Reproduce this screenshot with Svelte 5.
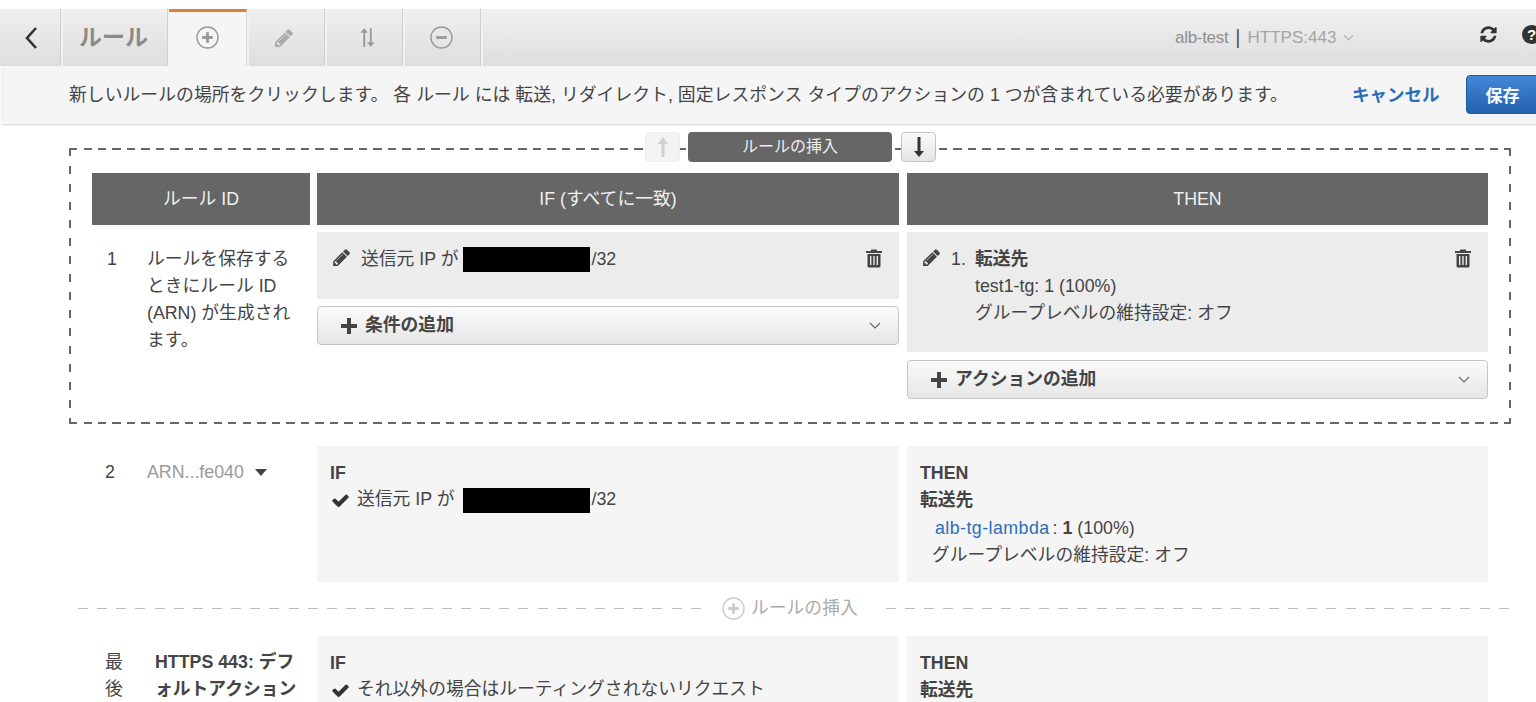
<script>
	const pencil =
		'M363 1408l91-91-235-235-91 91v107h128v128h107zm523-928q0-22-22-22-10 0-17 7l-542 542q-7 7-7 17 0 22 22 22 10 0 17-7l542-542q7-7 7-17zm-54-192l416 416-832 832h-416v-416zm683 96q0 53-37 90l-166 166-416-416 166-165q36-38 90-38 53 0 91 38l235 234q37 39 37 91z';
	const check =
		'M1671 566q0 40-28 68l-724 724-136 136q-28 28-68 28t-68-28l-136-136-362-362q-28-28-28-68t28-68l136-136q28-28 68-28t68 28l294 295 656-657q28-28 68-28t68 28l136 136q28 28 28 68z';
	const refresh =
		'M1639 1056q0 5-1 7-64 268-268 434.5t-478 166.5q-146 0-282.5-55t-243.5-157l-129 129q-19 19-45 19t-45-19-19-45v-448q0-26 19-45t45-19h448q26 0 45 19t19 45-19 45l-137 137q71 66 161 102t187 36q134 0 250-65t186-179q11-17 53-117 8-23 30-23h192q13 0 22.5 9.5t9.5 22.5zm25-800v448q0 26-19 45t-45 19h-448q-26 0-45-19t-19-45 19-45l138-138q-148-137-349-137-134 0-250 65t-186 179q-11 17-53 117-8 23-30 23h-199q-13 0-22.5-9.5t-9.5-22.5v-7q65-268 270-434.5t480-166.5q146 0 284 55.5t245 156.5l130-129q19-19 45-19t45 19 19 45z';
</script>

{#snippet trash()}
	<svg class="trash" viewBox="0 0 18 20" width="18" height="20">
		<path d="M6 3V1.500h6V3h5v2H1V3z" fill="#444" />
		<path
			d="M2.500 6h13v12a1.500 1.500 0 0 1-1.500 1.500H4A1.500 1.500 0 0 1 2.500 18zM5 8v9h1.400V8zm3.300 0v9h1.400V8zm3.300 0v9H13V8z"
			fill="#444"
			fill-rule="evenodd"
		/>
	</svg>
{/snippet}

{#snippet chevron()}
	<svg class="chevron" viewBox="0 0 12 7" width="12" height="7">
		<path d="M1 1l5 5 5-5" fill="none" stroke="#666" stroke-width="1.2" />
	</svg>
{/snippet}

{#snippet plus()}
	<svg class="plus" viewBox="0 0 16 16" width="16" height="16">
		<path d="M6 0h4v6h6v4h-6v6H6v-6H0V6h6z" fill="#444" />
	</svg>
{/snippet}

{#snippet circleIcon(minus, size, color)}
	<svg viewBox="0 0 24 24" width={size} height={size}>
		<circle cx="12" cy="12" r="11" fill="none" stroke={color} stroke-width="1.4" />
		<path d={minus ? 'M6.500 10.500h11v3h-11z' : 'M10.500 6.500h3v4h4v3h-4v4h-3v-4h-4v-3h4z'} fill={color} />
	</svg>
{/snippet}

<div class="page">
	<div class="toolbar">
		<div class="tab back">
			<svg viewBox="0 0 14 24" width="14" height="24">
				<path d="M12 2L3 12l9 10" fill="none" stroke="#333" stroke-width="2.6" />
			</svg>
		</div>
		<div class="tab title">ルール</div>
		<div class="tab active">{@render circleIcon(false, 23, '#999')}</div>
		<div class="tab icon pencil-tab">
			<svg viewBox="0 0 1515 1536" width="18" height="18"><path d={pencil} fill="#aaa" /></svg>
		</div>
		<div class="tab icon sort-tab">
			<svg viewBox="0 0 16 22" width="15" height="21">
				<path d="M3.500 21V6H0.500L4.500 1l4 5H5.500v15zM10.500 1v15h-3l4 5 4-5h-3V1z" fill="#999" />
			</svg>
		</div>
		<div class="tab icon minus-tab">{@render circleIcon(true, 23, '#999')}</div>
		<div class="toolbar-rest">
			<div class="lb-name">
				<span class="lb">alb-test</span> <span class="pipe">|</span> <span class="listener">HTTPS:443</span>
				<svg viewBox="0 0 12 7" width="11" height="7">
					<path d="M1 1l5 5 5-5" fill="none" stroke="#aaa" stroke-width="1.2" />
				</svg>
			</div>
			<svg class="refresh" viewBox="0 0 1792 1792" width="19" height="19"><path d={refresh} fill="#333" /></svg>
			<span class="help">?</span>
		</div>
	</div>

	<div class="message">
		<p>新しいルールの場所をクリックします。 各 ルール には 転送, リダイレクト, 固定レスポンス タイプのアクションの 1 つが含まれている必要があります。</p>
		<span class="cancel">キャンセル</span>
		<button class="save">保存</button>
	</div>

	<section class="edit-box">
		<div class="insert-control">
			<span class="arrow-btn disabled">
				<svg viewBox="0 0 12 22" width="12" height="22">
					<path d="M4.500 21V8H1L6 1l5 7H7.500v13z" fill="#d0d0d0" />
				</svg>
			</span>
			<span class="insert-label">ルールの挿入</span>
			<span class="arrow-btn down">
				<svg viewBox="0 0 12 22" width="12" height="22">
					<path d="M4.500 1v14H1l5 6 5-6H7.500V1z" fill="#333" />
				</svg>
			</span>
		</div>

		<div class="grid head">
			<div class="col1 hd">ルール ID</div>
			<div class="col2 hd">IF (すべてに一致)</div>
			<div class="hd">THEN</div>
		</div>

		<div class="grid edit-row">
			<div class="col1 rule-cell">
				<span class="num">1</span>
				<span class="rule-note">ルールを保存するときにルール ID (ARN) が生成されます。</span>
			</div>
			<div class="col2">
				<div class="edit-cell if-edit">
					<svg class="pen" viewBox="0 0 1515 1536" width="17" height="17"><path d={pencil} fill="#444" /></svg>
					<span>送信元 IP が</span>
					<span class="redact"></span><span class="after-redact">/32</span>
					{@render trash()}
				</div>
				<div class="add-btn">{@render plus()}<b>条件の追加</b>{@render chevron()}</div>
			</div>
			<div>
				<div class="edit-cell then-edit">
					<svg class="pen" viewBox="0 0 1515 1536" width="17" height="17"><path d={pencil} fill="#444" /></svg>
					<span class="step">1.</span>
					<div class="then-text">
						<b>転送先</b>
						<div>test1-tg: 1 (100%)</div>
						<div>グループレベルの維持設定: オフ</div>
					</div>
					{@render trash()}
				</div>
				<div class="add-btn then-add">{@render plus()}<b>アクションの追加</b>{@render chevron()}</div>
			</div>
		</div>
	</section>

	<div class="grid rule-row">
		<div class="col1 rule-cell">
			<span class="num">2</span>
			<span class="arn">ARN...fe040</span>
			<span class="caret"></span>
		</div>
		<div class="col2 view-cell">
			<b>IF</b>
			<div class="cond">
				<svg viewBox="0 0 1792 1792" width="19" height="19"><path d={check} fill="#333" /></svg>
				<span>送信元 IP が</span>
				<span class="redact"></span><span class="after-redact">/32</span>
			</div>
		</div>
		<div class="view-cell">
			<b>THEN</b>
			<b class="forward">転送先</b>
			<div class="target"><span class="link">alb-tg-lambda</span><span class="colon">:</span> <b>1</b> (100%)</div>
			<div class="stick">グループレベルの維持設定: オフ</div>
		</div>
	</div>

	<div class="divider">
		<span class="dash left"></span>
		<span class="insert-link">{@render circleIcon(false, 23, '#ccc')}<span>ルールの挿入</span></span>
		<span class="dash"></span>
	</div>

	<div class="grid rule-row last">
		<div class="col1 rule-cell">
			<span class="num last-num">最後</span>
			<b class="default-name">HTTPS 443: デフォルトアクション</b>
		</div>
		<div class="col2 view-cell">
			<b>IF</b>
			<div class="cond">
				<svg viewBox="0 0 1792 1792" width="19" height="19"><path d={check} fill="#333" /></svg>
				<span>それ以外の場合はルーティングされないリクエスト</span>
			</div>
		</div>
		<div class="view-cell">
			<b>THEN</b>
			<b class="forward">転送先</b>
		</div>
	</div>
</div>

<style>
	:global(body) {
		margin: 0;
		background: #fff;
		overflow: hidden;
	}

	.page {
		width: 1536px;
		height: 702px;
		overflow: hidden;
		padding-top: 9px;
		box-sizing: border-box;
		font-family: 'Liberation Sans', 'Noto Sans CJK JP', sans-serif;
		font-size: 17.8px;
		line-height: 27px;
		color: #444;
	}

	b {
		font-weight: 700;
	}

	.toolbar {
		display: flex;
		height: 57px;
		background: linear-gradient(#f0f0f0, #dedede);
	}

	.tab {
		display: flex;
		align-items: center;
		justify-content: center;
		box-sizing: border-box;
		height: 57px;
		margin-right: 4px;
		border-right: 1px solid #cfcfcf;
		background: linear-gradient(#efefef, #dedede);
		box-shadow: 2px 0 0 #f1f1f1;
	}

	.back {
		width: 61px;
		margin-right: 3px;
		padding-left: 2px;
	}

	.title {
		width: 104px;
		margin-right: 0;
		padding-right: 4px;
		font-size: 23px;
		font-weight: 700;
		color: #8a8a8a;
	}

	.active {
		width: 78px;
		margin-left: 1px;
		margin-right: 3px;
		background: #f5f5f5;
		border-top: 3px solid #dd8033;
		border-right: 1px solid #d4d4d4;
		padding-bottom: 3px;
	}

	.icon {
		width: 75px;
		margin-right: 3px;
	}

	.pencil-tab {
		padding-right: 6px;
	}

	.sort-tab {
		padding-left: 4px;
	}

	.minus-tab {
		padding-right: 4px;
	}

	.toolbar-rest {
		flex: 1;
		display: flex;
		align-items: center;
		min-width: 0;
		padding-left: 691px;
		white-space: nowrap;
	}

	.lb-name {
		display: flex;
		align-items: center;
		gap: 7px;
		flex: none;
		width: 304px;
		font-size: 17px;
		color: #8f8f8f;
	}

	.lb {
		letter-spacing: -0.3px;
	}

	.pipe {
		color: #555;
		font-size: 20px;
	}

	.listener {
		color: #a5a5a5;
	}

	.refresh {
		margin-top: -6px;
		flex: none;
	}

	.help {
		flex: none;
		width: 19px;
		height: 19px;
		margin-left: 24px;
		margin-top: -6px;
		border-radius: 50%;
		background: #333;
		color: #fff;
		font-size: 15px;
		font-weight: 700;
		line-height: 19px;
		text-align: center;
	}

	.message {
		display: flex;
		align-items: center;
		height: 58px;
		margin-left: 2px;
		padding-left: 67px;
		background: #f5f5f5;
		box-shadow: 0 1px 2px #d0d0d0;
		white-space: nowrap;
	}

	.message p {
		margin: 0;
		width: 1283px;
		flex: none;
		font-size: 17.85px;
	}

	.cancel {
		flex: none;
		font-size: 17.5px;
		font-weight: 700;
		color: #2a6ebb;
	}

	.save {
		flex: none;
		width: 80px;
		height: 39px;
		margin-left: 26px;
		margin-top: -1px;
		padding: 0 6px 0 0;
		border: 1px solid #1d5aa0;
		border-radius: 4px;
		background: linear-gradient(#4387d8, #2361ad);
		color: #fff;
		font: 700 17px 'Liberation Sans', 'Noto Sans CJK JP', sans-serif;
	}

	.edit-box {
		position: relative;
		box-sizing: border-box;
		width: 1442px;
		margin: 24px 0 0 69px;
		padding: 25px 23px;
		background:
			repeating-linear-gradient(90deg, #666 0 8px, transparent 8px 14.5px) 0 0 / 100% 2px no-repeat,
			repeating-linear-gradient(90deg, #666 0 8px, transparent 8px 14.5px) 0 100% / 100% 2px no-repeat,
			repeating-linear-gradient(180deg, #666 0 8px, transparent 8px 18px) 0 0 / 2px 100% no-repeat,
			repeating-linear-gradient(180deg, #666 0 8px, transparent 8px 18px) 100% 0 / 2px 100% no-repeat;
	}

	.insert-control {
		position: absolute;
		top: -16px;
		left: 576px;
		display: flex;
		align-items: center;
		gap: 8px;
	}

	.arrow-btn {
		display: flex;
		align-items: center;
		justify-content: center;
		box-sizing: border-box;
		width: 35px;
		height: 30px;
		border: 1px solid #c4c4c4;
		border-radius: 4px;
		background: linear-gradient(#fafafa, #e4e4e4);
	}

	.arrow-btn.disabled {
		border-color: #eee;
		background: #f3f3f3;
	}

	.arrow-btn.down {
		margin-left: 1px;
	}

	.insert-label {
		width: 204px;
		height: 30px;
		border-radius: 4px;
		background: #666;
		color: #eee;
		font-size: 16px;
		line-height: 30px;
		text-align: center;
	}

	.grid {
		display: grid;
		grid-template-columns: 225px 590px 581px;
	}

	.rule-row {
		margin: 22px 0 0 92px;
		width: 1396px;
		height: 136px;
	}

	.rule-row.last {
		margin-top: 0;
	}

	.col1 {
		margin-right: 7px;
	}

	.col2 {
		margin-right: 8px;
	}

	.hd {
		height: 52px;
		background: #666;
		color: #f0f0f0;
		line-height: 52px;
		text-align: center;
	}

	.edit-row {
		margin-top: 7px;
	}

	.rule-cell {
		display: flex;
		align-items: flex-start;
		padding-top: 13px;
	}

	.edit-row .rule-cell {
		padding-top: 14px;
	}

	.num {
		flex: none;
		width: 55px;
		padding-left: 13px;
		box-sizing: border-box;
	}

	.edit-row .num {
		padding-left: 15px;
	}

	.rule-note {
		width: 150px;
	}

	.edit-cell {
		position: relative;
		display: flex;
		align-items: flex-start;
		box-sizing: border-box;
		background: #ececec;
	}

	.if-edit {
		height: 67px;
		padding: 14px 0 0 16px;
	}

	.then-edit {
		height: 120px;
		padding: 14px 0 0 16px;
	}

	.pen {
		flex: none;
		margin: 3px 11px 0 0;
	}

	.redact {
		flex: none;
		display: block;
		width: 127px;
		height: 25px;
		margin: 1px 0 0 5px;
		background: #000;
	}

	.after-redact {
		margin-left: 1px;
	}

	.trash {
		position: absolute;
		top: 16px;
		right: 16px;
	}

	.step {
		width: 24px;
		flex: none;
	}

	.add-btn {
		display: flex;
		align-items: center;
		box-sizing: border-box;
		height: 39px;
		margin-top: 7px;
		padding: 0 17px 0 23px;
		border: 1px solid #c6c6c6;
		border-radius: 4px;
		background: linear-gradient(#fbfbfb, #e6e6e6);
	}

	.then-add {
		margin-top: 8px;
	}

	.add-btn b {
		flex: 1;
		margin-left: 8px;
	}

	.arn {
		width: 108px;
		color: #9a9a9a;
	}

	.caret {
		margin-top: 10px;
		border-left: 6.5px solid transparent;
		border-right: 6.5px solid transparent;
		border-top: 7px solid #444;
	}

	.last-num {
		width: 63px;
		padding-right: 30px;
	}

	.default-name {
		width: 145px;
		line-break: anywhere;
	}

	.view-cell {
		box-sizing: border-box;
		padding: 14px 13px 0;
		background: #f5f5f5;
	}

	.view-cell b {
		display: block;
	}

	.cond {
		display: flex;
		align-items: flex-start;
		margin-top: -1px;
	}

	.cond svg {
		flex: none;
		margin: 5px 7px 0 1px;
	}

	.cond .redact {
		margin: 2px 0 0 9px;
	}

	.target {
		margin-top: 1px;
		padding-left: 15px;
	}

	.target b {
		display: inline;
	}

	.link {
		color: #2a6ebb;
		letter-spacing: 0.45px;
	}

	.colon {
		margin-left: 3px;
	}

	.stick {
		padding-left: 12px;
	}

	.divider {
		display: flex;
		align-items: center;
		height: 54px;
		margin-left: 78px;
		width: 1432px;
		padding-bottom: 2px;
		box-sizing: border-box;
	}

	.dash {
		flex: 1;
		height: 1px;
		background: repeating-linear-gradient(90deg, #bbb 0 10px, transparent 10px 19.15px);
	}

	.dash.left {
		flex: none;
		width: 627px;
	}

	.insert-link {
		display: flex;
		align-items: center;
		gap: 6px;
		width: 181px;
		padding-left: 17px;
		box-sizing: border-box;
		color: #aaa;
	}
</style>
